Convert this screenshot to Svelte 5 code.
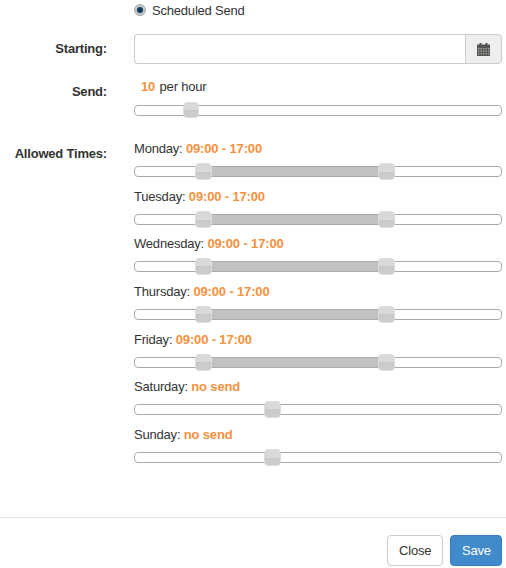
<script>
	const days = [
		{ name: "Monday", value: "09:00 - 17:00", low: 70, high: 253 },
		{ name: "Tuesday", value: "09:00 - 17:00", low: 70, high: 253 },
		{ name: "Wednesday", value: "09:00 - 17:00", low: 70, high: 253 },
		{ name: "Thursday", value: "09:00 - 17:00", low: 70, high: 253 },
		{ name: "Friday", value: "09:00 - 17:00", low: 70, high: 253 },
		{ name: "Saturday", value: "no send", low: 139 },
		{ name: "Sunday", value: "no send", low: 138.5 },
	];
</script>

<main>
	<div class="form">
		<div class="radio-row">
			<span class="radio"><span class="dot"></span></span>
			<span>Scheduled Send</span>
		</div>

		<div class="row starting">
			<div class="label">Starting:</div>
			<div class="input-group">
				<input type="text" />
				<span class="addon">
					<svg width="13" height="13" viewBox="0 0 13 13">
						<rect x="0" y="1.5" width="13" height="11.5" fill="#555" />
						<rect x="2.5" y="0" width="2" height="3" fill="#555" />
						<rect x="8.5" y="0" width="2" height="3" fill="#555" />
						<g fill="#a9a49c">
							{#each [1, 3.5, 6, 8.5, 11] as x}
								{#each [5, 7.5, 10] as y}
									<rect {x} {y} width="1.4" height="1.4" />
								{/each}
							{/each}
						</g>
					</svg>
				</span>
			</div>
		</div>

		<div class="row send">
			<div class="label">Send:</div>
			<div class="field">
				<div class="rate"><b>10</b> per hour</div>
				<div class="slider">
					<span class="handle" style="left: 57px"></span>
				</div>
			</div>
		</div>

		<div class="row times">
			<div class="label">Allowed Times:</div>
			<div class="field">
				{#each days as day}
					<div class="day">
						<div class="day-text">{day.name}: <b>{day.value}</b></div>
						<div class="slider">
							{#if day.high}
								<span class="range" style="left: {day.low}px; width: {day.high - day.low}px"></span>
								<span class="handle" style="left: {day.low}px"></span>
								<span class="handle" style="left: {day.high}px"></span>
							{:else}
								<span class="handle" style="left: {day.low}px"></span>
							{/if}
						</div>
					</div>
				{/each}
			</div>
		</div>
	</div>

	<div class="footer">
		<button class="close">Close</button>
		<button class="save">Save</button>
	</div>
</main>

<style>
	:global(body) {
		margin: 0;
		background: #fff;
	}

	main {
		width: 506px;
		height: 568px;
		overflow: hidden;
		font-family: "Liberation Sans", Arial, sans-serif;
		font-size: 13px;
		letter-spacing: -0.2px;
		line-height: 22px;
		color: #333;
	}

	.form {
		height: 517px;
		box-sizing: border-box;
		padding-right: 4px;
	}

	.radio-row {
		display: flex;
		align-items: center;
		height: 22px;
		padding-left: 134px;
		gap: 6px;
	}

	.radio {
		width: 12px;
		height: 12px;
		margin-top: -2px;
		box-sizing: border-box;
		border-radius: 50%;
		background: #c4c8cc;
		border: 1px solid #a8acb0;
		display: flex;
		align-items: center;
		justify-content: center;
	}

	.dot {
		width: 6px;
		height: 6px;
		border-radius: 50%;
		background: #123c5c;
	}

	.row {
		display: grid;
		grid-template-columns: 107px 1fr;
		column-gap: 27px;
	}

	.label {
		font-weight: bold;
		text-align: right;
	}

	.starting {
		margin-top: 12px;
		height: 30px;
	}

	.starting .label {
		padding-top: 4px;
	}

	.input-group {
		display: flex;
		height: 30px;
	}

	input {
		flex: 1;
		min-width: 0;
		box-sizing: border-box;
		height: 30px;
		border: 1px solid #ccc;
		border-right: 0;
		border-radius: 4px 0 0 4px;
		padding: 0 12px;
		outline: none;
	}

	.addon {
		width: 37px;
		box-sizing: border-box;
		border: 1px solid #ccc;
		border-radius: 0 4px 4px 0;
		background: #eee;
		display: flex;
		align-items: center;
		justify-content: center;
	}

	.send {
		margin-top: 12px;
	}

	.send .label {
		padding-top: 5px;
	}

	.rate {
		padding-left: 7px;
		height: 20px;
	}

	b {
		color: #f7913d;
		font-weight: bold;
		letter-spacing: -0.15px;
	}

	.rate b {
		margin-right: 1px;
	}

	.slider {
		position: relative;
		height: 11px;
		box-sizing: border-box;
		border: 1px solid #aaa;
		border-radius: 4px;
		background: #fff;
	}

	.send .slider {
		margin-top: 9px;
	}

	.send .handle {
		width: 16px;
		height: 16px;
		margin-left: -9px;
	}

	.range {
		position: absolute;
		top: 0;
		bottom: 0;
		background: #c2c2c2;
	}

	.handle {
		position: absolute;
		top: -4px;
		width: 17px;
		height: 17px;
		margin-left: -10px;
		box-sizing: border-box;
		border: 1px solid #dcdcdc;
		border-radius: 4px;
		background: linear-gradient(#d9d9d9 0, #d9d9d9 50%, #c9c9c9 50%, #cdcdcd 100%);
	}

	.times {
		margin-top: 22px;
	}

	.times .label {
		padding-top: 5px;
	}

	.day {
		height: 47.67px;
	}

	.day-text {
		height: 20px;
		margin-bottom: 8px;
	}

	.footer {
		height: 51px;
		box-sizing: border-box;
		border-top: 1px solid #e5e5e5;
		padding: 17px 4px 0 0;
		display: flex;
		justify-content: flex-end;
		gap: 7px;
	}

	button {
		height: 31px;
		font: inherit;
		letter-spacing: inherit;
		border-radius: 4px;
		padding: 0 13px 0 11px;
	}

	.close {
		width: 56px;
		background: #fff;
		border: 1px solid #ccc;
		color: #333;
	}

	.save {
		width: 52px;
		background: #428bca;
		border: 1px solid #357ebd;
		color: #fff;
	}
</style>
